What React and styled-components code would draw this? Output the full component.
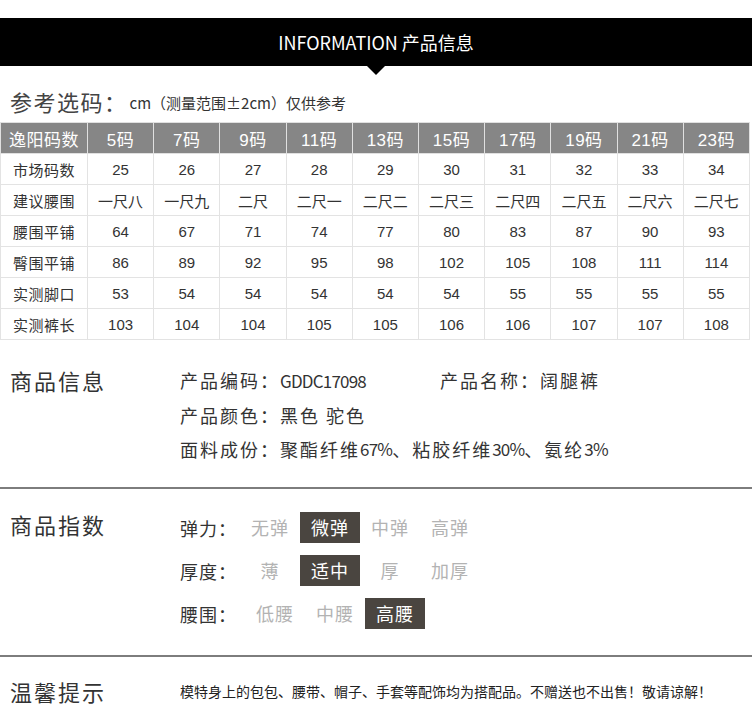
import styled, { createGlobalStyle } from 'styled-components'

const GlobalStyle = createGlobalStyle`
  body {
    margin: 0;
    background: #fff;
    font-family: "Noto Sans CJK SC", "Noto Sans", sans-serif;
    color: #333;
  }
`;

const sizes = ['5码', '7码', '9码', '11码', '13码', '15码', '17码', '19码', '21码', '23码'];

const rows = [
  ['市场码数', '25', '26', '27', '28', '29', '30', '31', '32', '33', '34'],
  ['建议腰围', '一尺八', '一尺九', '二尺', '二尺一', '二尺二', '二尺三', '二尺四', '二尺五', '二尺六', '二尺七'],
  ['腰围平铺', '64', '67', '71', '74', '77', '80', '83', '87', '90', '93'],
  ['臀围平铺', '86', '89', '92', '95', '98', '102', '105', '108', '111', '114'],
  ['实测脚口', '53', '54', '54', '54', '54', '54', '55', '55', '55', '55'],
  ['实测裤长', '103', '104', '104', '105', '105', '106', '106', '107', '107', '108'],
];

const indexRows = [
  { label: '弹力：', options: ['无弹', '微弹', '中弹', '高弹'], active: 1, indent: 0 },
  { label: '厚度：', options: ['薄', '适中', '厚', '加厚'], active: 1, indent: 0 },
  { label: '腰围：', options: ['低腰', '中腰', '高腰'], active: 2, indent: 5 },
];

function App() {
  return (
    <Page>
      <GlobalStyle />
      <Banner>INFORMATION 产品信息</Banner>

      <SizeTitle>
        参考选码：<small>cm（测量范围±2cm）仅供参考</small>
      </SizeTitle>

      <SizeTable>
        <thead>
          <tr>
            <th>逸阳码数</th>
            {sizes.map((s) => <th key={s}>{s}</th>)}
          </tr>
        </thead>
        <tbody>
          {rows.map((r) => (
            <tr key={r[0]}>
              {r.map((c, i) => <td key={i}>{c}</td>)}
            </tr>
          ))}
        </tbody>
      </SizeTable>

      <Section $top={23} $bottom={21}>
        <SectionLabel>商品信息</SectionLabel>
        <InfoList>
          <InfoLine>
            <span className="code">产品编码：<Latin>GDDC17098</Latin></span>
            <span>产品名称：阔腿裤</span>
          </InfoLine>
          <InfoLine>产品颜色：黑色 驼色</InfoLine>
          <InfoLine>
            面料成份：聚酯纤维<Latin>67%</Latin>、粘胶纤维<Latin>30%</Latin>、氨纶<Latin>3%</Latin>
          </InfoLine>
        </InfoList>
      </Section>

      <Divider />

      <Section $top={23} $bottom={26}>
        <SectionLabel $lh={24}>商品指数</SectionLabel>
        <IndexList>
          {indexRows.map((row) => (
            <IndexRow key={row.label}>
              <IndexLabel $indent={row.indent}>{row.label}</IndexLabel>
              {row.options.map((o, i) => (
                <Option key={o} $active={i === row.active}>{o}</Option>
              ))}
            </IndexRow>
          ))}
        </IndexList>
      </Section>

      <Divider />

      <Section $top={17} $bottom={16}>
        <SectionLabel>温馨提示</SectionLabel>
        <Tip>模特身上的包包、腰带、帽子、手套等配饰均为搭配品。不赠送也不出售！敬请谅解！</Tip>
      </Section>
    </Page>
  )
}

const Page = styled.div`
  width: 752px;
`;

const Banner = styled.div`
  position: relative;
  margin-top: 18px;
  height: 48px;
  background: #000;
  color: #fff;
  display: flex;
  align-items: center;
  justify-content: center;
  font-size: 18px;

  &::after {
    content: '';
    position: absolute;
    left: 50%;
    bottom: -9px;
    margin-left: -9px;
    border-left: 9px solid transparent;
    border-right: 9px solid transparent;
    border-top: 9px solid #000;
  }
`;

const SizeTitle = styled.div`
  box-sizing: border-box;
  height: 56px;
  padding: 14px 10px 0;
  font-size: 22px;
  letter-spacing: 1.5px;
  color: #444;
  display: flex;
  align-items: center;

  small {
    font-size: 15px;
    letter-spacing: 0;
    color: #333;
    margin: 3px 0 0 2px;
  }
`;

const SizeTable = styled.table`
  width: 750px;
  border-collapse: collapse;
  table-layout: fixed;
  font-family: "Liberation Sans", "Noto Sans CJK SC", sans-serif;

  th, td {
    height: 30px;
    padding: 0;
    border: 1px solid #e3e3e3;
    text-align: center;
    white-space: nowrap;
  }
  th {
    background: #868686;
    color: #fff;
    font-weight: normal;
    font-size: 17px;
    letter-spacing: 0.5px;
    border-color: #e0e0e0;
  }
  th:first-child {
    width: 86px;
  }
  td {
    font-size: 15px;
    color: #333;
  }
  td:first-child {
    letter-spacing: 0.5px;
  }
`;

const Section = styled.div`
  display: flex;
  padding: ${(p) => p.$top}px 0 ${(p) => p.$bottom}px 10px;
`;

const SectionLabel = styled.div`
  width: 170px;
  flex-shrink: 0;
  font-size: 22px;
  letter-spacing: 2px;
  line-height: ${(p) => p.$lh || 34}px;
  color: #333;
`;

const InfoList = styled.div`
  display: flex;
  flex-direction: column;
`;

const InfoLine = styled.div`
  display: flex;
  font-size: 18px;
  letter-spacing: 2px;
  line-height: 34px;
  color: #333;
  white-space: pre;

  .code {
    width: 260px;
  }
`;

const Latin = styled.span`
  font-size: 17px;
  letter-spacing: -0.8px;
`;

const Divider = styled.hr`
  margin: 0;
  border: 0;
  height: 2px;
  background: #7d7d7d;
`;

const IndexList = styled.div`
  display: flex;
  flex-direction: column;
  gap: 12px;
`;

const IndexRow = styled.div`
  display: flex;
  align-items: center;
  height: 31px;
  font-size: 18px;
`;

const IndexLabel = styled.div`
  width: ${(p) => 60 + p.$indent}px;
  letter-spacing: 1px;
  color: #333;
`;

const Option = styled.div`
  width: 60px;
  height: 31px;
  line-height: 31px;
  text-align: center;
  letter-spacing: 1px;
  background: ${(p) => (p.$active ? '#4a4540' : 'transparent')};
  color: ${(p) => (p.$active ? '#fff' : '#b3b3b3')};
`;

const Tip = styled.div`
  font-size: 14px;
  line-height: 34px;
  color: #222;
`;

export default App
